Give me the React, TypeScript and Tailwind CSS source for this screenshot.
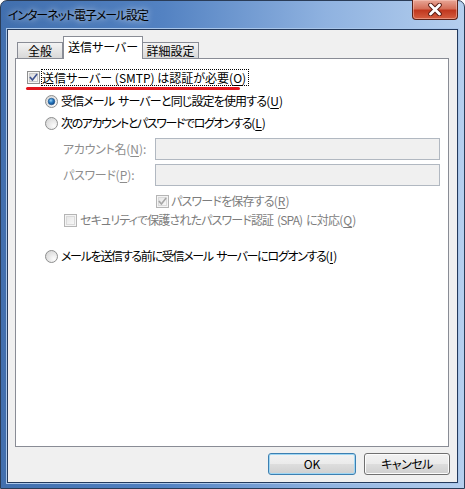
import React from "react";

function CheckBox({ checked, disabled }: { checked?: boolean; disabled?: boolean }) {
  const border = disabled ? "#b5b5b5" : "#8e8f8f";
  const mark = disabled ? "#a6a6a6" : "#3d5290";
  const id = disabled ? "cbd" : "cbe";
  return (
    <svg width="13" height="13" viewBox="0 0 13 13" className="shrink-0 block">
      <defs>
        <linearGradient id={id} x1="0" y1="0" x2="1" y2="1">
          <stop offset="0" stopColor={disabled ? "#e6e6e6" : "#d8d8d8"} />
          <stop offset="1" stopColor={disabled ? "#f8f8f8" : "#fbfbfb"} />
        </linearGradient>
      </defs>
      <rect x="0.5" y="0.5" width="12" height="12" fill="#f4f4f4" stroke={border} />
      <rect x="2.5" y="2.5" width="8" height="8" fill={`url(#${id})`} stroke={disabled ? "#dadada" : "#c9c9c9"} />
      {checked && (
        <path d="M3.4 6.6 L5.4 8.9 L9.6 3.6" stroke={mark} strokeWidth="1.6" fill="none" strokeLinecap="square" />
      )}
    </svg>
  );
}

function Radio({ checked }: { checked?: boolean }) {
  return (
    <svg width="13" height="13" viewBox="0 0 13 13" className="shrink-0 block">
      <defs>
        <radialGradient id="rbg" cx="0.7" cy="0.7" r="0.8">
          <stop offset="0" stopColor="#fcfcfc" />
          <stop offset="1" stopColor="#d6d6d6" />
        </radialGradient>
        <radialGradient id="rdot" cx="0.4" cy="0.35" r="0.7">
          <stop offset="0" stopColor="#9bd3f7" />
          <stop offset="0.45" stopColor="#2d7fc4" />
          <stop offset="1" stopColor="#0d3f7c" />
        </radialGradient>
      </defs>
      <circle cx="6.5" cy="6.5" r="6" fill="url(#rbg)" stroke="#8e8f8f" />
      {checked && <circle cx="6.5" cy="6.5" r="3.3" fill="url(#rdot)" stroke="#1a4f8a" strokeWidth="0.6" />}
    </svg>
  );
}

function Mn({ k }: { k: string }) {
  return (
    <span className="tracking-normal">
      (<span className="underline underline-offset-2">{k}</span>)
    </span>
  );
}

export default function App() {
  return (
    <div className="w-[465px] h-[489px] font-['Noto_Sans_CJK_JP',sans-serif] [font-feature-settings:'palt'] text-[12px] leading-[16px] text-black whitespace-nowrap">
      <div className="w-full h-full flex flex-col border border-[#2a3c57] rounded-t-[7px] bg-[linear-gradient(to_right,#416fae,#5382c2_35%,#8fb2e0_70%,#b5cfee)]">
        {/* title bar */}
        <div className="h-[28px] flex items-start shrink-0">
          <div className="ml-[7px] mt-[6px] tracking-[-1.1px] [text-shadow:0_0_6px_rgba(255,255,255,0.9)]">
            インターネット電子メール設定
          </div>
          <div className="relative z-10 ml-auto mr-[6px] -mt-px w-[46px] h-[20px] rounded-b-[4px] border border-t-0 border-[#5a2219] bg-[linear-gradient(#e8a696,#d5705a_45%,#c0381f_55%,#d55f41)] shadow-[inset_0_0_0_1px_rgba(255,210,200,0.45)] flex items-center justify-center">
            <svg width="18" height="13" viewBox="0 0 18 13">
              <path d="M4.5 2 L13.5 11 M13.5 2 L4.5 11" stroke="#5a1d14" strokeWidth="4.6" strokeLinecap="round" />
              <path d="M4.5 2 L13.5 11 M13.5 2 L4.5 11" stroke="#ffffff" strokeWidth="2.8" strokeLinecap="round" />
            </svg>
          </div>
        </div>

        {/* client */}
        <div className="mx-[6px] h-[454px] border border-[#243a5c] shadow-[0_0_0_1px_#a9c6ea] bg-[#f0f0f0] flex flex-col pl-[7px] pr-[8px]">
          {/* tabs */}
          <div className="mt-[6px] h-[22px] flex items-end pl-[2px] shrink-0">
            <div className="w-[46px] h-[16px] border border-b-0 border-[#898c95] bg-[linear-gradient(#f3f3f3,#e6e6e6_50%,#d8d8d8)] flex items-center justify-center">
              全般
            </div>
            <div className="relative z-10 -mb-px w-[80px] h-[23px] border border-b-0 border-[#898c95] bg-white flex items-center justify-center pb-[3px]">
              送信サーバー
            </div>
            <div className="w-[56px] h-[16px] border border-b-0 border-l-0 border-[#898c95] bg-[linear-gradient(#f3f3f3,#e6e6e6_50%,#d8d8d8)] flex items-center justify-center">
              詳細設定
            </div>
          </div>

          {/* panel */}
          <div className="h-[389px] border border-[#898c95] bg-white flex flex-col shrink-0">
            <div className="mt-[10px] ml-[11px] h-[17px] flex items-center">
              <CheckBox checked />
              <span className="ml-[1px] h-[17px] border border-dotted border-black pr-[2px] leading-[15px]">
                送信サーバー (SMTP) は認証が必要<Mn k="O" />
              </span>
            </div>
            <div className="mt-[1px] ml-[10px] w-[214px] h-[3px] rounded-full bg-[#e2141c]" />

            <div className="mt-[3px] ml-[29px] h-[16px] flex items-center gap-[3px]">
              <Radio checked />
              <span className="tracking-[-0.85px] [word-spacing:2px]">
                受信メール サーバーと同じ設定を使用する<Mn k="U" />
              </span>
            </div>
            <div className="mt-[6px] ml-[29px] h-[16px] flex items-center gap-[3px]">
              <Radio />
              <span className="tracking-[-1.4px]">
                次のアカウントとパスワードでログオンする<Mn k="L" />
              </span>
            </div>

            <div className="mt-[7px] ml-[47px] h-[22px] flex items-center text-[#8d8d8d]">
              <span className="w-[92px] tracking-[-0.3px]">
                アカウント名<Mn k="N" />:
              </span>
              <div className="w-[285px] h-[22px] border border-[#b1b8c1] bg-[#f0f0f0]" />
            </div>
            <div className="mt-[4px] ml-[47px] h-[22px] flex items-center text-[#8d8d8d]">
              <span className="w-[92px] tracking-[-0.3px]">
                パスワード<Mn k="P" />:
              </span>
              <div className="w-[285px] h-[22px] border border-[#b1b8c1] bg-[#f0f0f0]" />
            </div>

            <div className="mt-[7px] ml-[140px] h-[16px] flex items-center gap-[2px] text-[#7d7d7d]">
              <CheckBox checked disabled />
              <span className="tracking-[-0.8px]">
                パスワードを保存する<Mn k="R" />
              </span>
            </div>
            <div className="mt-[3px] ml-[48px] h-[16px] flex items-center gap-[3px] text-[#7d7d7d]">
              <CheckBox disabled />
              <span className="tracking-[-0.85px] [word-spacing:2px]">
                セキュリティで保護されたパスワード認証 (SPA) に対応<Mn k="Q" />
              </span>
            </div>

            <div className="mt-[20px] ml-[29px] h-[16px] flex items-center gap-[3px]">
              <Radio />
              <span className="tracking-[-1.3px] [word-spacing:2px]">
                メールを送信する前に受信メール サーバーにログオンする<Mn k="I" />
              </span>
            </div>
          </div>

          {/* buttons */}
          <div className="mt-[6px] -mr-px flex justify-end gap-[8px] shrink-0">
            <button className="w-[88px] h-[22px] rounded-[3px] border border-[#3c7fb1] shadow-[inset_0_0_0_1px_#9fd6f3] bg-[linear-gradient(#f2f2f2,#ebebeb_48%,#dddddd_52%,#cfcfcf)] flex items-center justify-center">
              OK
            </button>
            <button className="w-[86px] h-[22px] rounded-[3px] border border-[#707070] shadow-[inset_0_0_0_1px_#fcfcfc] bg-[linear-gradient(#f2f2f2,#ebebeb_48%,#dddddd_52%,#cfcfcf)] flex items-center justify-center tracking-[-0.5px]">
              キャンセル
            </button>
          </div>
        </div>
      </div>
    </div>
  );
}
